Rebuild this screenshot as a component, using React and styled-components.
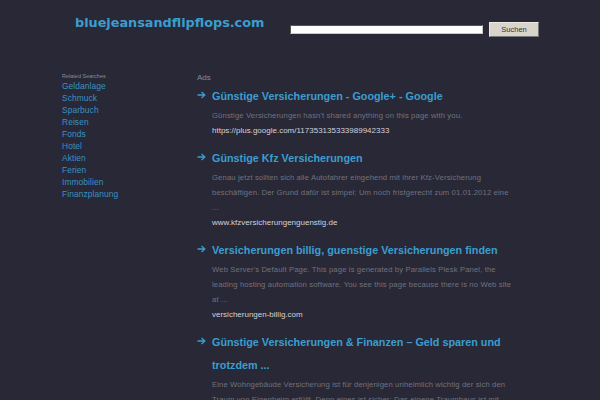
import React from "react";
import styled, { createGlobalStyle } from "styled-components";

const Global = createGlobalStyle`
	html, body {
		margin: 0;
		padding: 0;
		background: #282837;
	}
	body {
		font-family: "Liberation Sans", Arial, sans-serif;
	}
`;

const Page = styled.div`
	width: 600px;
	height: 400px;
	overflow: hidden;
	background: #282837;
`;

const Header = styled.header`
	display: flex;
	align-items: center;
	height: 46px;
	padding-left: 75px;
`;

const Logo = styled.a`
	flex-shrink: 0;
	width: 215px;
	font-family: "DejaVu Sans", Verdana, sans-serif;
	font-weight: bold;
	font-size: 12.8px;
	color: #3c9dcf;
	text-decoration: none;
	margin-top: -2px;
`;

const SearchForm = styled.form`
	display: flex;
	align-items: center;
	gap: 6px;
	margin: 13px 0 0;
	flex-shrink: 0;
`;

const SearchInput = styled.input`
	box-sizing: border-box;
	flex-shrink: 0;
	width: 193px;
	height: 9px;
	padding: 0;
	border: 1px solid #c8c8c8;
	border-top-color: #555;
	border-left-color: #555;
	background: #fff;
`;

const SearchButton = styled.button`
	box-sizing: border-box;
	flex-shrink: 0;
	width: 50px;
	height: 15px;
	padding: 0;
	font-family: "Liberation Sans", Arial, sans-serif;
	font-size: 7.5px;
	color: #333;
	background: #d8d4cc;
	border: 1px solid #eeeae2;
	border-right-color: #777;
	border-bottom-color: #777;
`;

const Body = styled.div`
	display: flex;
	padding-left: 62px;
	padding-top: 26px;
`;

const Sidebar = styled.aside`
	width: 135px;
	flex-shrink: 0;
`;

const SideHeading = styled.div`
	font-size: 5.5px;
	color: #8a8a98;
	line-height: 7px;
	padding-top: 1px;
`;

const SideLink = styled.a`
	display: block;
	font-size: 8.4px;
	letter-spacing: 0.1px;
	line-height: 12px;
	color: #3a92c4;
	text-decoration: none;
`;

const Main = styled.main`
	flex: 1;
	padding-right: 50px;
`;

const AdsLabel = styled.div`
	font-size: 8px;
	color: #8a8a95;
	line-height: 10px;
	margin-top: 1px;
	margin-bottom: 2px;
`;

const Result = styled.div`
	margin-bottom: 9px;
`;

const TitleRow = styled.div`
	display: flex;
	align-items: flex-start;
`;

const Arrow = styled.svg`
	width: 9px;
	height: 8px;
	margin-top: 6px;
	margin-right: 6px;
	flex-shrink: 0;
`;

const Title = styled.a`
	max-width: 300px;
	font-size: 10.8px;
	font-weight: bold;
	line-height: 23px;
	color: #3c9dcf;
	text-decoration: none;
`;

const Desc = styled.p`
	max-width: 302px;
	margin: 0;
	padding-left: 15px;
	font-size: 7.7px;
	line-height: 15px;
	color: #72727e;
	letter-spacing: 0.12px;
	white-space: pre-line;
`;

const Url = styled.div`
	padding-left: 15px;
	font-size: 8px;
	line-height: 15px;
	color: #d2d2da;
`;

const related = [
	"Geldanlage",
	"Schmuck",
	"Sparbuch",
	"Reisen",
	"Fonds",
	"Hotel",
	"Aktien",
	"Ferien",
	"Immobilien",
	"Finanzplanung",
];

const results = [
	{
		title: "Günstige Versicherungen - Google+ - Google",
		desc: "Günstige Versicherungen hasn't shared anything on this page with you.",
		url: "https://plus.google.com/117353135333989942333",
	},
	{
		title: "Günstige Kfz Versicherungen",
		desc: "Genau jetzt sollten sich alle Autofahrer eingehend mit ihrer Kfz-Versicherung beschäftigen. Der Grund dafür ist simpel: Um noch fristgerecht zum 01.01.2012 eine\n...",
		url: "www.kfzversicherungenguenstig.de",
	},
	{
		title: "Versicherungen billig, guenstige Versicherungen finden",
		desc: "Web Server's Default Page. This page is generated by Parallels Plesk Panel, the leading hosting automation software. You see this page because there is no Web site at ...",
		url: "versicherungen-billig.com",
	},
	{
		title: "Günstige Versicherungen & Finanzen – Geld sparen und trotzdem ...",
		desc: "Eine Wohngebäude Versicherung ist für denjenigen unheimlich wichtig der sich den Traum von Eigenheim erfüllt. Denn eines ist sicher: Das eigene Traumhaus ist mit ...",
		url: "www.versicherungen-finanzen.de",
	},
];

function ArrowIcon() {
	return (
		<Arrow viewBox="0 0 9 8">
			<path d="M0.5 4 H7.5 M4.5 1 L7.8 4 L4.5 7" fill="none" stroke="#3c9dcf" strokeWidth="1.3" />
		</Arrow>
	);
}

export default function App() {
	return (
		<Page>
			<Global />
			<Header>
				<Logo href="#">bluejeansandflipflops.com</Logo>
				<SearchForm onSubmit={(e) => e.preventDefault()}>
					<SearchInput type="text" />
					<SearchButton type="submit">Suchen</SearchButton>
				</SearchForm>
			</Header>
			<Body>
				<Sidebar>
					<SideHeading>Related Searches</SideHeading>
					{related.map((r) => (
						<SideLink key={r} href="#">
							{r}
						</SideLink>
					))}
				</Sidebar>
				<Main>
					<AdsLabel>Ads</AdsLabel>
					{results.map((r) => (
						<Result key={r.title}>
							<TitleRow>
								<ArrowIcon />
								<Title href="#">{r.title}</Title>
							</TitleRow>
							<Desc>{r.desc}</Desc>
							<Url>{r.url}</Url>
						</Result>
					))}
				</Main>
			</Body>
		</Page>
	);
}
